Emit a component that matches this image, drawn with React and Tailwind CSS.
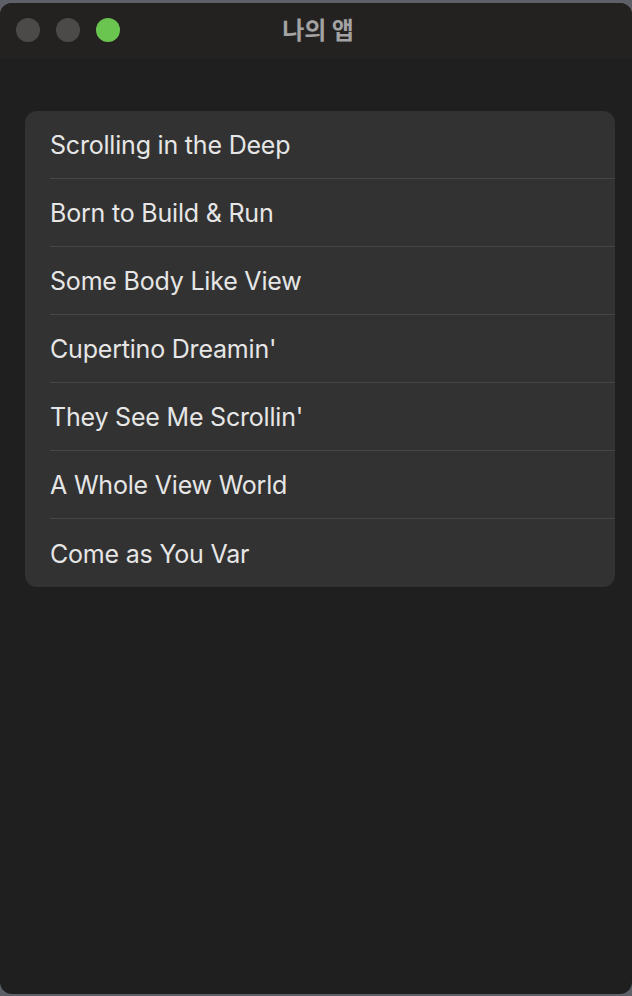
export default function App() {
  const items = [
    "Scrolling in the Deep",
    "Born to Build & Run",
    "Some Body Like View",
    "Cupertino Dreamin'",
    "They See Me Scrollin'",
    "A Whole View World",
    "Come as You Var",
  ];
  return (
    <div className="w-[632px] h-[996px] bg-[#5d6067] pt-[3px] pb-[2px]" style={{ fontFamily: "Inter, 'Noto Sans', 'Noto Sans CJK KR', sans-serif" }}>
      <div className="h-full rounded-[12px] overflow-hidden bg-[#1f1f1f] flex flex-col">
        <div className="h-[56px] bg-[#232221] relative flex items-center justify-center shrink-0">
          <div className="absolute left-[16px] top-[15px] flex gap-[16px]">
            <div className="w-[24px] h-[24px] rounded-full bg-[#4b4a49]" />
            <div className="w-[24px] h-[24px] rounded-full bg-[#4b4a49]" />
            <div className="w-[24px] h-[24px] rounded-full bg-[#6ac550]" />
          </div>
          <div className="text-[24px] font-bold text-[#a3a3a3] leading-none pb-[4px] pl-[4px]" style={{ fontFamily: "'Noto Sans CJK KR', sans-serif" }}>나의 앱</div>
        </div>
        <div className="pl-[25px] pr-[17px] pt-[52px]">
          <div className="bg-[#323232] rounded-[12px] pl-[25px]">
            {items.map((t, i) => (
              <div key={i} className={"h-[68px] flex items-center pt-[3px] text-[25px] text-[#e6e6e6] tracking-[-0.2px] " + (i < items.length - 1 ? "border-b border-[#464646]" : "")}>
                {t}
              </div>
            ))}
          </div>
        </div>
      </div>
    </div>
  );
}
